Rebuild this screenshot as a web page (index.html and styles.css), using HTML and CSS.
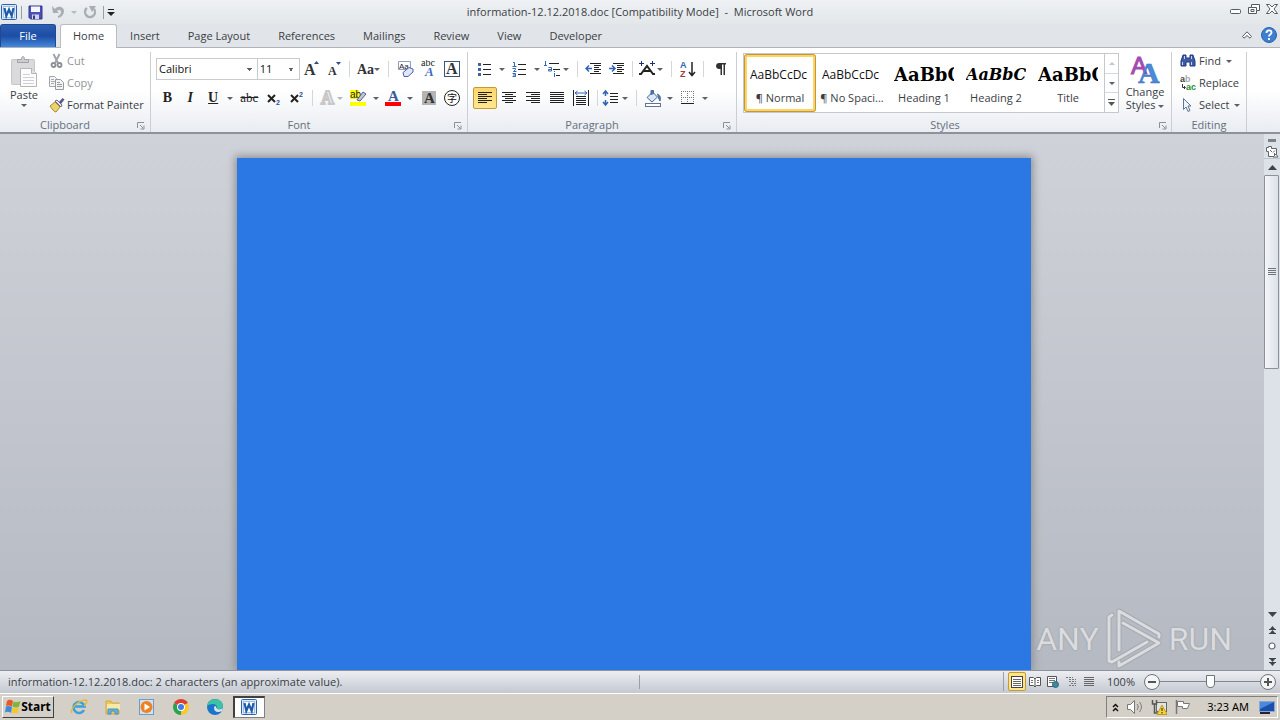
FILE: index.html
```html
<!DOCTYPE html>
<html lang="en">
<head>
    <meta charset="UTF-8">
    <meta name="viewport" content="width=device-width, initial-scale=1.0">
    <title>information-12.12.2018.doc [Compatibility Mode] - Microsoft Word</title>
    <link rel="stylesheet" href="styles.css">
</head>

<body>
    <!-- title bar -->
    <header class="titlebar">
        <div class="quick">
            <svg width="17" height="17" viewBox="0 0 17 17"><rect x=".5" y=".5" width="15" height="15" rx="1" fill="#dceafa" stroke="#2a62ad"/><rect x="2.500" y="2.500" width="11" height="11" fill="#fff" stroke="#9fc0e6"/><path d="M3.500 4l1.800 8L8 5.500l2.700 6.500 1.800-8" fill="none" stroke="#1c5cab" stroke-width="2.200"/></svg>
            <span class="bar"></span>
            <button type="button" class="qbtn" aria-label="Save"><svg width="15" height="15" viewBox="0 0 15 15"><path d="M1 1h13v13H2.500L1 12.500z" fill="#4c4fb5" stroke="#34378d"/><path d="M3 1.500h9V7H3z" fill="#f4f6fc"/><path d="M4 9.500h7V14H4z" fill="#cfd3ea"/><path d="M5 10.500h2V14H5z" fill="#34378d"/></svg></button>
            <button type="button" class="qbtn" aria-label="Undo"><svg width="14" height="14" viewBox="0 0 14 14"><path d="M1 1l1 7h6L6 6c2-2 4-1 4 1 0 1.500-1 3-3 4v2c4-1 6-4 6-7 0-4-6-6-9-2z" fill="#aaadb2"/></svg></button>
            <i class="arrow grey"></i>
            <button type="button" class="qbtn" aria-label="Repeat"><svg width="14" height="14" viewBox="0 0 14 14"><path d="M4 3a5 5 0 1 0 7 1" fill="none" stroke="#aaadb2" stroke-width="2.400"/><path d="M6 1h7L9 7z" fill="#aaadb2"/></svg></button>
            <span class="bar"></span>
            <button type="button" class="qbtn small" aria-label="Customize"><svg width="8" height="8" viewBox="0 0 8 8"><path d="M1 1h6v1H1zM0 4h8L4 8z" fill="#222"/></svg></button>
        </div>
        <h1 class="title">information-12.12.2018.doc [Compatibility Mode] &nbsp;-&nbsp; Microsoft Word</h1>
        <div class="window">
            <button type="button" aria-label="Minimize"><svg width="12" height="12" viewBox="0 0 12 12"><rect x=".5" y="6.500" width="10" height="4" rx="1" fill="#fff" stroke="#555b62"/></svg></button>
            <button type="button" aria-label="Restore"><svg width="12" height="12" viewBox="0 0 12 12"><path d="M3.500 1.500h8v6h-3v3h-8v-6h3z" fill="#fff" stroke="#555b62"/><path d="M3.500 4.500h5v3M3 6.500h3v2H3z" fill="none" stroke="#555b62"/></svg></button>
            <button type="button" aria-label="Close"><svg width="12" height="12" viewBox="0 0 12 12"><path d="M.5 1.500h3L6 4l2.500-2.500h3L8 6l3.500 4.500h-3L6 8l-2.500 2.500h-3L4 6z" fill="#fff" stroke="#555b62"/></svg></button>
        </div>
    </header>

    <!-- ribbon tabs -->
    <nav class="tabs">
        <button type="button" class="file">File</button>
        <button type="button" class="tab active">Home</button>
        <button type="button" class="tab">Insert</button>
        <button type="button" class="tab">Page Layout</button>
        <button type="button" class="tab">References</button>
        <button type="button" class="tab">Mailings</button>
        <button type="button" class="tab">Review</button>
        <button type="button" class="tab">View</button>
        <button type="button" class="tab">Developer</button>
        <div class="help">
            <button type="button" aria-label="Minimize the Ribbon"><svg width="10" height="8" viewBox="0 0 10 8"><path d="M.5 5.500L5 .8l4.500 4.700L8 7.200 5 4.500 2 7.200z" fill="#fff" stroke="#555b62"/></svg></button>
            <button type="button" aria-label="Help"><svg width="16" height="16" viewBox="0 0 16 16"><circle cx="8" cy="8" r="7.500" fill="#3f7fcf" stroke="#2d61a8"/><path d="M5.500 6c0-3.500 5-3.500 5-.5 0 2-2.500 2-2.500 4M8 11v2" fill="none" stroke="#fff" stroke-width="1.800"/></svg></button>
        </div>
    </nav>

    <!-- ribbon -->
    <section class="ribbon">
        <div class="group clipboard">
            <div class="content">
                <button type="button" class="big">
                    <svg width="28" height="32" viewBox="0 0 28 32"><rect x="1.500" y="3.500" width="23" height="25" rx="1" fill="#dadadd" stroke="#c6c6ca"/><path d="M7.500 6.500V3.500h4c0-4 3-4 3 0h4v3z" fill="#cdcdd1" stroke="#a2a2a7"/><path d="M10.500 12.500h11l5 5v13h-16z" fill="#fcfcfc" stroke="#b4b4b9"/><path d="M21.500 12.500v5h5" fill="#e4e4e6" stroke="#b4b4b9"/><path d="M13 18.500h7M13 21.500h11M13 24.500h11M13 27.500h11" stroke="#d0d0d4"/></svg>
                    <span>Paste</span>
                    <i class="arrow"></i>
                </button>
                <div class="stack">
                    <button type="button" class="line" disabled><svg width="16" height="16" viewBox="0 0 16 16"><path d="M4.500 1l4.500 9M10.500 1L6 10" stroke="#a2a5aa" stroke-width="2"/><circle cx="4.500" cy="12" r="2" fill="none" stroke="#8b8e93" stroke-width="1.800"/><circle cx="10.500" cy="12" r="2" fill="none" stroke="#8b8e93" stroke-width="1.800"/></svg>Cut</button>
                    <button type="button" class="line" disabled><svg width="16" height="16" viewBox="0 0 16 16"><path d="M.5 1.500h5l2 2v8h-7z" fill="#f4f4f4" stroke="#a2a5a9"/><path d="M2 4.500h3M2 6.500h4M2 8.500h3" stroke="#aaa"/><path d="M6.500 4.500h5l3 3v7h-8z" fill="#f4f4f4" stroke="#96999d"/><path d="M8 7.500h3M8 9.500h5M8 11.500h5" stroke="#999"/></svg>Copy</button>
                    <button type="button" class="line"><svg width="16" height="16" viewBox="0 0 16 16"><path d="M1 9l5-4 5 5-4 5c-2 0-4-3-6-6z" fill="#ecd36c" stroke="#a88b35"/><path d="M6 4l2-1 5 5-1 2z" fill="#e6e7ef" stroke="#6d6d80"/><path d="M10 5l3.500-4 2 1.500L12 7z" fill="#5b5591"/></svg>Format Painter</button>
                </div>
            </div>
            <div class="caption">Clipboard<button type="button" class="launch" aria-label="Clipboard options"><svg width="8" height="8" viewBox="0 0 8 8"><path d="M.5 6V.5H7M3 3l3.500 3.500M7 3.500V7H3.500" fill="none" stroke="#8c9198"/></svg></button></div>
        </div>

        <div class="group font">
            <div class="rows">
                <div class="row">
                    <select class="combo face" aria-label="Font"><option>Calibri</option></select>
                    <select class="combo size" aria-label="Font Size"><option>11</option></select>
                    <button type="button" class="tool" aria-label="Grow Font"><svg width="18" height="18" viewBox="0 0 18 18"><text x="2" y="15" class="serif" font-size="16">A</text><path d="M12 4l2.500-3L17 4z" fill="#2f4a86"/></svg></button>
                    <button type="button" class="tool" aria-label="Shrink Font"><svg width="18" height="18" viewBox="0 0 18 18"><text x="3" y="15" class="serif" font-size="12">A</text><path d="M11 2h5l-2.500 3z" fill="#2f4a86"/></svg></button>
                    <span class="sep"></span>
                    <button type="button" class="tool drop" aria-label="Change Case"><svg width="20" height="18" viewBox="0 0 20 18"><text x="3" y="14" class="serif" font-size="14">Aa</text></svg><i class="arrow"></i></button>
                    <span class="sep"></span>
                    <button type="button" class="tool" aria-label="Clear Formatting"><svg width="18" height="18" viewBox="0 0 18 18"><path d="M2.500 1.500h12v8h-12z" fill="#fff" stroke="#8a9fc4"/><text x="3" y="9" font-family="Liberation Sans" font-size="8" fill="#223">Aa</text><path d="M7 12.500l6-5 4 1.500v3l-5 4.500H8z" fill="#dfe6f7" stroke="#4b65a8"/></svg></button>
                    <button type="button" class="tool" aria-label="Phonetic Guide"><svg width="18" height="18" viewBox="0 0 18 18"><text x="2" y="6" font-family="Liberation Serif" font-size="10" fill="#222">abc</text><text x="6" y="16" font-family="Liberation Serif" font-style="italic" font-weight="bold" font-size="13" fill="#3b6cc0">A</text></svg></button>
                    <button type="button" class="tool" aria-label="Character Border"><svg width="18" height="18" viewBox="0 0 18 18"><rect x="2.500" y="1.500" width="15" height="15" fill="#fff" stroke="#3a5680"/><text x="4" y="14" class="serif" font-size="16">A</text></svg></button>
                </div>
                <div class="row">
                    <button type="button" class="tool letter"><b>B</b></button>
                    <button type="button" class="tool letter"><em>I</em></button>
                    <button type="button" class="tool letter"><u>U</u></button>
                    <button type="button" class="more" aria-label="Underline style"><i class="arrow"></i></button>
                    <button type="button" class="tool letter wide"><s>abc</s></button>
                    <button type="button" class="tool" aria-label="Subscript"><svg width="18" height="18" viewBox="0 0 18 18"><path d="M3 6l7 7M10 6l-7 7" stroke="#222" stroke-width="2"/><text x="11" y="16" class="sans" font-size="7" fill="#1f4fa5">2</text></svg></button>
                    <button type="button" class="tool" aria-label="Superscript"><svg width="18" height="18" viewBox="0 0 18 18"><path d="M3 6l7 7M10 6l-7 7" stroke="#222" stroke-width="2"/><text x="11" y="8" class="sans" font-size="7" fill="#1f4fa5">2</text></svg></button>
                    <span class="sep"></span>
                    <button type="button" class="tool drop" aria-label="Text Effects" disabled><svg width="20" height="18" viewBox="0 0 20 18"><text x="4" y="15" font-family="Liberation Serif" font-weight="bold" font-size="18" fill="#fff" stroke="#c8c8ca" stroke-width="2">A</text></svg><i class="arrow grey"></i></button>
                    <button type="button" class="tool" aria-label="Highlight"><svg width="18" height="18" viewBox="0 0 18 18"><path d="M1 1h9v9H1z" fill="#ff0"/><text x="1" y="9" font-family="Liberation Sans" font-size="10" fill="#222">ab</text><path d="M8 11l6-8 3 2-6 7z" fill="#bcc7de" stroke="#56617a"/><path d="M1 13h16v4H1z" fill="#ff0"/></svg></button>
                    <button type="button" class="more" aria-label="Highlight colour"><i class="arrow"></i></button>
                    <button type="button" class="tool" aria-label="Font Color"><svg width="18" height="18" viewBox="0 0 18 18"><text x="4" y="12" font-family="Liberation Serif" font-weight="bold" font-size="15" fill="#3a5a9a">A</text><path d="M1 13h16v4H1z" fill="#f00"/></svg></button>
                    <button type="button" class="more" aria-label="More colours"><i class="arrow"></i></button>
                    <button type="button" class="tool" aria-label="Character Shading"><svg width="18" height="18" viewBox="0 0 18 18"><path d="M3 2h14v14H3z" fill="#b4b4b4"/><text x="5" y="14" class="serif" font-size="15">A</text></svg></button>
                    <button type="button" class="tool" aria-label="Enclose Characters"><svg width="18" height="18" viewBox="0 0 18 18"><circle cx="10" cy="9" r="7.500" fill="#fff" stroke="#222"/><text x="5" y="13" font-family="Noto Sans CJK JP" font-size="10" fill="#111">字</text></svg></button>
                </div>
            </div>
            <div class="caption">Font<button type="button" class="launch" aria-label="Font options"><svg width="8" height="8" viewBox="0 0 8 8"><path d="M.5 6V.5H7M3 3l3.500 3.500M7 3.500V7H3.500" fill="none" stroke="#8c9198"/></svg></button></div>
        </div>

        <div class="group paragraph">
            <div class="rows">
                <div class="row">
                    <button type="button" class="tool" aria-label="Bullets"><svg width="18" height="18" viewBox="0 0 18 18"><path d="M2 3h3v3H2zM2 8h3v3H2zM2 13h3v3H2z" fill="#44619c"/><path d="M7 4.500h8M7 9.500h8M7 14.500h8" stroke="#222"/></svg></button>
                    <button type="button" class="more" aria-label="Bullet library"><i class="arrow"></i></button>
                    <button type="button" class="tool" aria-label="Numbering"><svg width="18" height="18" viewBox="0 0 18 18"><path d="M2 2.500h1.500V6M1.500 6.500h4M1.500 8.500h3v1l-2 2h3M1.500 13.500h3v3h-3M2 15h2" stroke="#3565b5" fill="none"/><path d="M7 4.500h8M7 9.500h8M7 14.500h8" stroke="#222"/></svg></button>
                    <button type="button" class="more" aria-label="Number library"><i class="arrow"></i></button>
                    <button type="button" class="tool drop" aria-label="Multilevel List"><svg width="20" height="18" viewBox="0 0 20 18"><path d="M2.500 1v4M1 5.500h3M5.500 7.500h3v3.500h-3V9.500h3M11.500 11v1M11.500 13v4" stroke="#3565b5" fill="none"/><path d="M6 3.500h10M10 9.500h7M13 15.500h4" stroke="#222"/></svg><i class="arrow"></i></button>
                    <span class="sep"></span>
                    <button type="button" class="tool" aria-label="Decrease Indent"><svg width="18" height="18" viewBox="0 0 18 18"><path d="M5 3.500h11M9 5.500h7M9 7.500h5M9 9.500h7M9 11.500h5M5 13.500h11" stroke="#222"/><path d="M1 8.500h6M4 5.500l-3 3 3 3" stroke="#2f63b5" stroke-width="1.500" fill="none"/></svg></button>
                    <button type="button" class="tool" aria-label="Increase Indent"><svg width="18" height="18" viewBox="0 0 18 18"><path d="M5 3.500h11M9 5.500h7M9 7.500h5M9 9.500h7M9 11.500h5M5 13.500h11" stroke="#222"/><path d="M1 8.500h6M4 5.500l3 3-3 3" stroke="#2f63b5" stroke-width="1.500" fill="none"/></svg></button>
                    <span class="sep"></span>
                    <button type="button" class="tool drop" aria-label="Asian Layout"><svg width="20" height="18" viewBox="0 0 20 18"><path d="M2 14h2l6-8 6 8h2M6 11h8" stroke="#222" stroke-width="2" fill="none"/><path d="M2 3.500h5M4.500 1v5M13 3.500h5M15.500 1v5" stroke="#1c2f7c" fill="none"/></svg><i class="arrow"></i></button>
                    <span class="sep"></span>
                    <button type="button" class="tool" aria-label="Sort"><svg width="18" height="18" viewBox="0 0 18 18"><text x="1" y="8" class="sans" font-size="9" fill="#2f63b5">A</text><text x="1" y="17" class="sans" font-size="9" fill="#a33a3a">Z</text><path d="M13 2v13M10 12l3 3.500 3-3.500" stroke="#222" stroke-width="1.500" fill="none"/></svg></button>
                    <span class="sep"></span>
                    <button type="button" class="tool" aria-label="Show Marks"><svg width="18" height="18" viewBox="0 0 18 18"><path d="M8 3h7v1.500h-1V15h-1.500V4.500H11V15H9.500V9H8C4 9 4 3 8 3z" fill="#333"/></svg></button>
                </div>
                <div class="row">
                    <button type="button" class="tool align on" aria-label="Align Left"><svg width="16" height="14" viewBox="0 0 16 14"><path d="M1 1.500h14M1 3.500h9M1 5.500h14M1 7.500h9M1 9.500h14M1 11.500h9" stroke="#222"/></svg></button>
                    <button type="button" class="tool align" aria-label="Center"><svg width="16" height="14" viewBox="0 0 16 14"><path d="M1 1.500h14M4 3.500h8M1 5.500h14M4 7.500h8M1 9.500h14M4 11.500h8" stroke="#222"/></svg></button>
                    <button type="button" class="tool align" aria-label="Align Right"><svg width="16" height="14" viewBox="0 0 16 14"><path d="M1 1.500h14M6 3.500h9M1 5.500h14M6 7.500h9M1 9.500h14M6 11.500h9" stroke="#222"/></svg></button>
                    <button type="button" class="tool align" aria-label="Justify"><svg width="16" height="14" viewBox="0 0 16 14"><path d="M1 1.500h14M1 3.500h14M1 5.500h14M1 7.500h14M1 9.500h14M1 11.500h14" stroke="#222"/></svg></button>
                    <button type="button" class="tool align" aria-label="Distributed"><svg width="16" height="16" viewBox="0 0 16 16"><path d="M.5 0v16M15.500 0v16M3 6.500h10M3 8.500h10M3 10.500h10M3 12.500h10M3 14.500h10" stroke="#222"/><path d="M2 3h12M4.500 1L2 3l2.500 2M11.500 1L14 3l-2.500 2" stroke="#2f63b5" fill="none"/></svg></button>
                    <span class="sep"></span>
                    <button type="button" class="tool drop" aria-label="Line Spacing"><svg width="20" height="18" viewBox="0 0 20 18"><path d="M3.500 2v5M3.500 11v5M1 5l2.500-3L6 5M1 13l2.500 3L6 13" stroke="#2f63b5" stroke-width="1.500" fill="none"/><path d="M8 4.500h8M8 7.500h8M8 10.500h8M8 13.500h8" stroke="#222"/></svg><i class="arrow"></i></button>
                    <span class="sep"></span>
                    <button type="button" class="tool" aria-label="Shading"><svg width="18" height="18" viewBox="0 0 18 18"><path d="M3 8.500L8.500 3l5 5-5.500 5z" fill="#dbe6f7" stroke="#4c6795"/><path d="M7 6V1.500h2.500V5M13 5c3 1 4 3 3 7l-2-4" fill="#3d77c5" stroke="#4c6795"/><rect x="1.500" y="14.500" width="15" height="3" fill="#fff" stroke="#60758f"/></svg></button>
                    <button type="button" class="more" aria-label="Shading colours"><i class="arrow"></i></button>
                    <button type="button" class="tool" aria-label="Borders"><svg width="14" height="14" viewBox="0 0 14 14"><path d="M.5 0v13M6.500 0v13M12.500 0v13M0 .5h13M0 6.500h13" stroke="#777" stroke-dasharray="1 1"/><path d="M0 12.500h13" stroke="#222"/></svg></button>
                    <button type="button" class="more" aria-label="Border types"><i class="arrow"></i></button>
                </div>
            </div>
            <div class="caption">Paragraph<button type="button" class="launch" aria-label="Paragraph options"><svg width="8" height="8" viewBox="0 0 8 8"><path d="M.5 6V.5H7M3 3l3.500 3.500M7 3.500V7H3.500" fill="none" stroke="#8c9198"/></svg></button></div>
        </div>

        <div class="group styles">
            <div class="content">
                <div class="gallery">
                    <button type="button" class="style on"><span class="sample">AaBbCcDc</span><span>¶ Normal</span></button>
                    <button type="button" class="style"><span class="sample">AaBbCcDc</span><span>¶ No Spaci...</span></button>
                    <button type="button" class="style"><span class="sample heading">AaBbC</span><span>Heading 1</span></button>
                    <button type="button" class="style"><span class="sample heading slant">AaBbCc</span><span>Heading 2</span></button>
                    <button type="button" class="style"><span class="sample heading">AaBbC</span><span>Title</span></button>
                    <div class="scroll">
                        <button type="button" aria-label="Row up"><i class="arrow up"></i></button>
                        <button type="button" aria-label="Row down"><i class="arrow"></i></button>
                        <button type="button" aria-label="More styles"><svg width="7" height="7" viewBox="0 0 7 7"><path d="M0 0h7v1H0zM0 3h7L3.500 7z" fill="#555"/></svg></button>
                    </div>
                </div>
                <button type="button" class="big change">
                    <svg width="30" height="30" viewBox="0 0 30 30"><text x="1" y="19" font-family="Liberation Sans" font-size="24" fill="#a34bb0" stroke="#a34bb0">A</text><text x="8" y="28" font-family="Liberation Serif" font-weight="bold" font-size="30" fill="#4a8ad8" stroke="#3a6fc0" stroke-width=".5">A</text></svg>
                    <span>Change<br>Styles <i class="arrow"></i></span>
                </button>
            </div>
            <div class="caption">Styles<button type="button" class="launch" aria-label="Styles options"><svg width="8" height="8" viewBox="0 0 8 8"><path d="M.5 6V.5H7M3 3l3.500 3.500M7 3.500V7H3.500" fill="none" stroke="#8c9198"/></svg></button></div>
        </div>

        <div class="group editing">
            <div class="stack">
                <button type="button" class="line"><svg width="16" height="16" viewBox="0 0 16 16"><path d="M3 2h3v3h4V2h3l2 6v5h-5V9H6v4H1V8z" fill="#3c5ca8" stroke="#223a78"/><path d="M2.500 9v3M11.500 9v3M4.500 3v3M11.500 3v3" stroke="#c8d6f4"/></svg>Find <i class="arrow"></i></button>
                <button type="button" class="line"><svg width="16" height="16" viewBox="0 0 16 16"><text x="0" y="7" class="sans" font-size="9" fill="#444">a</text><text x="5" y="7" class="sans" font-size="9" fill="#aaa">b</text><path d="M2.500 9v3.500H5M4 11l1.500 1.500L4 14" fill="none" stroke="#335"/><text x="6" y="15" class="sans" font-size="9" fill="#2b8a35">ac</text></svg>Replace</button>
                <button type="button" class="line"><svg width="16" height="16" viewBox="0 0 16 16"><path d="M3.500 1.500v11l2.500-2.500 2 4.500 2-1-2-4.500h3z" fill="#eef3fb" stroke="#5e7596"/></svg>Select <i class="arrow"></i></button>
            </div>
            <div class="caption">Editing</div>
        </div>
    </section>

    <!-- document -->
    <main class="workspace">
        <div class="canvas">
            <div class="page"></div>
            <div class="watermark">
                <span>ANY</span>
                <svg width="58" height="62" viewBox="0 0 58 62"><g fill="none" stroke-linejoin="round" stroke-linecap="round"><path d="M7 7L4 9v44l3 1 35-20M14 42V3l40 23v3M18 15l36 20-40 23v-4" stroke="#a6aab0" stroke-width="5"/><path d="M7 7L4 9v44l3 1 35-20M14 42V3l40 23v3M18 15l36 20-40 23v-4" stroke="#dadcdf" stroke-width="3"/></g></svg>
                <span>RUN</span>
            </div>
        </div>
        <aside class="scrollbar">
            <button type="button" class="split" aria-label="Split"></button>
            <button type="button" class="ruler" aria-label="View Ruler"><svg width="13" height="13" viewBox="0 0 13 13"><path d="M.5 2.500h2v-1h3v2h5v8h-8v-5h-2z" fill="#fff" stroke="#62666f"/><path d="M4 5l2 2M7 7.500l2-2M8.500 8v3M10 9l2 3H7z" fill="#fff" stroke="#62666f"/></svg></button>
            <button type="button" class="step" aria-label="Scroll up"><svg width="9" height="5" viewBox="0 0 9 5"><path d="M0 5h9L4.500 0z" fill="#3f434b"/></svg></button>
            <div class="track"><div class="thumb"><i></i></div></div>
            <button type="button" class="step" aria-label="Scroll down"><svg width="9" height="5" viewBox="0 0 9 5"><path d="M0 0h9L4.500 5z" fill="#3f434b"/></svg></button>
            <button type="button" class="step" aria-label="Previous page"><svg width="7" height="8" viewBox="0 0 7 8"><path d="M1 3h5L3.500 0zM1 7h5L3.500 4zM0 3h7v1H0zM0 7h7v1H0z" fill="#3f434b"/></svg></button>
            <button type="button" class="step" aria-label="Browse object"><svg width="8" height="8" viewBox="0 0 8 8"><circle cx="4" cy="4" r="3" fill="#fff" stroke="#62666f" stroke-width="1.200"/></svg></button>
            <button type="button" class="step" aria-label="Next page"><svg width="7" height="8" viewBox="0 0 7 8"><path d="M1 1h5L3.500 4zM1 5h5L3.500 8zM0 0h7v1H0zM0 4h7v1H0z" fill="#3f434b"/></svg></button>
        </aside>
    </main>

    <!-- status bar -->
    <footer class="status">
        <span class="info">information-12.12.2018.doc: 2 characters (an approximate value).</span>
        <div class="views">
            <button type="button" class="view on" aria-label="Print Layout"><svg width="12" height="12" viewBox="0 0 12 12"><rect x=".5" y=".5" width="11" height="11" fill="#fff" stroke="#444"/><path d="M2 3.500h8M2 5.500h8M2 7.500h8M2 9.500h8" stroke="#666"/></svg></button>
            <button type="button" class="view" aria-label="Full Screen Reading"><svg width="12" height="12" viewBox="0 0 12 12"><path d="M.5 1.500h4L6 3l1.500-1.500h4v8h-4L6 11 4.500 9.500h-4zM6 3v8" fill="#fff" stroke="#555"/><path d="M2 4.500h2M2 6.500h2M8 4.500h2M8 6.500h2" stroke="#777"/></svg></button>
            <button type="button" class="view" aria-label="Web Layout"><svg width="12" height="12" viewBox="0 0 12 12"><path d="M.5 .5h9v10h-9z" fill="#fff" stroke="#555"/><path d="M2 2.500h6M2 4.500h6M2 6.500h4" stroke="#777"/><circle cx="8.500" cy="8.500" r="3" fill="#3c8d8d" stroke="#2e5f9a"/></svg></button>
            <button type="button" class="view" aria-label="Outline"><svg width="12" height="12" viewBox="0 0 12 12"><path d="M1 1.500h7M4 3.500h7M4 5.500h7M6 7.500h5M4 9.500h7" stroke="#777" stroke-dasharray="2 1"/></svg></button>
            <button type="button" class="view" aria-label="Draft"><svg width="12" height="12" viewBox="0 0 12 12"><path d="M1 1.500h10M1 3.500h10M1 5.500h10M1 7.500h10M1 9.500h10" stroke="#666"/></svg></button>
            <button type="button" class="percent">100%</button>
            <button type="button" class="round" aria-label="Zoom out"><svg width="8" height="8" viewBox="0 0 8 8"><path d="M0 3h8v2H0z" fill="#555"/></svg></button>
            <input type="range" class="zoom" min="0" max="100" value="50" aria-label="Zoom">
            <button type="button" class="round" aria-label="Zoom in"><svg width="8" height="8" viewBox="0 0 8 8"><path d="M0 3h8v2H0zM3 0h2v8H3z" fill="#555"/></svg></button>
        </div>
    </footer>

    <!-- taskbar -->
    <footer class="taskbar">
        <button type="button" class="start"><svg width="16" height="16" viewBox="0 0 16 16"><path d="M2 2c2-2 4-1 6 0L7 7.500C5 6.500 3 6 1 7z" fill="#e8582a"/><path d="M8.500 2.500c2 1 4 1 7-.5L14 7.500c-2 1.500-4 1-6.500 .3z" fill="#7db63b"/><path d="M1 7.500c2-1 4-.5 6 .5l-1 6c-2-1.500-4-1.500-6-.5z" fill="#3d8bd8"/><path d="M7.500 8.500c2 1 4 1 6.500-.5l-1 5.500c-2 1-4 1-6.500 .5z" fill="#f7c52e"/></svg>Start</button>
        <div class="apps">
            <button type="button" aria-label="Internet Explorer"><svg width="18" height="18" viewBox="0 0 18 18"><path d="M14 12a5.500 5.500 0 1 1 .5-3.500H5" fill="none" stroke="#3ba0dc" stroke-width="2.600"/><path d="M2 15C-1 12 8 2 16 2c2 1 0 4-2 6" fill="none" stroke="#e5b93a" stroke-width="1.400"/></svg></button>
            <button type="button" aria-label="Explorer"><svg width="18" height="18" viewBox="0 0 18 18"><path d="M2 3h5l1 2h7v11H2z" fill="#ecc95b" stroke="#d2aa43"/><path d="M3 6h13v6H3z" fill="#f9e9a6"/><path d="M4 16v-5h10v5h-3v-3H7v3z" fill="#67b4dd" stroke="#4692be"/></svg></button>
            <button type="button" aria-label="Media Player"><svg width="18" height="18" viewBox="0 0 18 18"><rect x="1.500" y="1.500" width="14" height="15" fill="#cfe1f2" stroke="#6c9cc9"/><circle cx="8.500" cy="9" r="6" fill="#ef8120"/><path d="M6.500 5.500v7l5.500-3.500z" fill="#fff"/></svg></button>
            <button type="button" aria-label="Chrome"><svg width="18" height="18" viewBox="0 0 18 18"><path d="M9 9L2.100 5a8 8 0 0 1 13.800 0z" fill="#df3d31"/><path d="M9 9l6.900-4A8 8 0 0 1 9 17z" fill="#fcc829"/><path d="M9 9v8A8 8 0 0 1 2.100 5z" fill="#2ba24c"/><circle cx="9" cy="9" r="4" fill="#fff"/><circle cx="9" cy="9" r="3" fill="#3f7de8"/></svg></button>
            <button type="button" aria-label="Edge"><svg width="18" height="18" viewBox="0 0 18 18"><circle cx="9" cy="9" r="8" fill="#1b74c9"/><path d="M1 8C2-1 17-1 17 8c0 3-4 4-7 3 2-3 0-5-3-5-3 0-5 1-6 2z" fill="#3cc2a5"/><path d="M8 10c0 4 4 5 8 3l1-3c-2 2-7 2-7-1 0-2-2-1-2 1z" fill="#d4e5ee"/></svg></button>
            <button type="button" class="current" aria-label="Word"><svg width="17" height="17" viewBox="0 0 17 17"><rect x=".5" y=".5" width="15" height="15" rx="1" fill="#dceafa" stroke="#2a62ad"/><rect x="2.500" y="2.500" width="11" height="11" fill="#fff" stroke="#9fc0e6"/><path d="M3.500 4l1.800 8L8 5.500l2.700 6.500 1.800-8" fill="none" stroke="#1c5cab" stroke-width="2.200"/></svg></button>
        </div>
        <div class="tray">
            <button type="button" aria-label="Show hidden icons"><svg width="7" height="9" viewBox="0 0 7 9"><path d="M1 4l2.500-2.500L6 4M1 8l2.500-2.500L6 8" fill="none" stroke="#111" stroke-width="1.500"/></svg></button>
            <svg width="16" height="16" viewBox="0 0 16 16"><path d="M.5 5.500h3l4-4v13l-4-4h-3z" fill="#fff" stroke="#777"/><path d="M10 5c1.500 2 1.500 4 0 6M12.500 3c2.500 3 2.500 7 0 10" fill="none" stroke="#777"/></svg>
            <svg width="16" height="16" viewBox="0 0 16 16"><rect x="5.500" y="3.500" width="10" height="9" fill="#dfe4e8" stroke="#666"/><path d="M1.500 1v4h4V1M3.500 5v9h4" fill="none" stroke="#555" stroke-width="1.500"/><path d="M11 6l5 9.500H6z" fill="#f8d437" stroke="#c49b1b"/><path d="M11 9v3M11 13v1.500" stroke="#222"/></svg>
            <svg width="16" height="16" viewBox="0 0 16 16"><path d="M1.500 1v14" stroke="#777" stroke-width="1.500"/><path d="M2.500 2.500h6v2h6l-2 5h-5v-2h-5z" fill="#fff" stroke="#777"/></svg>
            <time>3:23 AM</time>
            <svg width="16" height="14" viewBox="0 0 16 14"><path d="M.5 1.500h15v10H.5z" fill="#1b4fae" stroke="#89a7cf"/><path d="M1 2h14L1 9z" fill="#4a88dc"/><path d="M1 12h10v2H1z" fill="#223"/></svg>
        </div>
    </footer>
</body>
</html>
```

FILE: styles.css
```css
*
{
    margin:0;
    padding:0;
    box-sizing:border-box;
}
body
{
    height:100vh;
    display:flex;
    flex-direction:column;
    overflow:hidden;
    background:#e1e5e9;
    color:#3a3e44;
    font-family:"Open Sans", "Noto Sans", sans-serif;
    font-size:11px;
    line-height:14px;
}
button
{
    display:flex;
    align-items:center;
    justify-content:center;
    border:0;
    background:none;
    color:inherit;
    font:inherit;
    white-space:nowrap;
}
button:disabled{
    color:#929599;
}
svg{
    display:block;
    flex:none;
}
.serif{
    font-family:"Liberation Serif", serif;
    font-weight:bold;
    fill:#333;
}
.sans{
    font-family:"Liberation Sans", sans-serif;
    font-weight:bold;
}

/* little drop-down triangle */
.arrow{
    display:inline-block;
    flex:none;
    border:3px solid transparent;
    border-top-color:#5d6167;
    border-bottom:0;
    vertical-align:middle;
}
.arrow.up{
    border-top:0;
    border-bottom:3px solid #c3c6ca;
}
.arrow.grey{
    border-top-color:#b5b8bc;
}

/* title bar */
.titlebar{
    display:grid;
    grid-template-columns:1fr auto 1fr;
    align-items:center;
    height:24px;
    background:linear-gradient(#eff1f4,#e3e7ea);
}
.quick{
    display:flex;
    align-items:center;
    gap:3px;
    padding-left:1px;
}
.bar{
    width:1px;
    height:13px;
    background:#9a9ea5;
}
.qbtn{
    width:20px;
    height:20px;
}
.qbtn.small{
    width:8px;
}
.title{
    font-size:11px;
    font-weight:normal;
}
.window{
    display:flex;
    justify-content:flex-end;
    gap:6px;
    padding:0 2px 6px 0;
}

/* tabs */
.tabs{
    display:flex;
    align-items:flex-end;
    gap:2px;
    height:24px;
    background:#e1e5e9;
    border-bottom:1px solid #b0b4ba;
}
.tab{
    height:23px;
    padding:0 13px;
}
.tab.active{
    height:24px;
    margin:0 -2px -1px 0;
    background:#fff;
    border:1px solid #b9bdc3;
    border-bottom:0;
    border-radius:3px 3px 0 0;
    padding:0 12px 2px;
}
.file{
    width:56px;
    height:23px;
    margin-right:2px;
    background:linear-gradient(#2c5fb4,#1d4da4 50%,#4389dd);
    border:1px solid #1f4a93;
    border-bottom:0;
    border-radius:3px 3px 0 0;
    color:#fff;
}
.help{
    display:flex;
    gap:9px;
    margin-left:auto;
    padding:0 3px 4px 0;
}

/* ribbon */
.ribbon{
    display:flex;
    height:86px;
    padding-top:4px;
    background:linear-gradient(#fff 50%,#e9ecf1);
    border-bottom:2px solid #8e929a;
}
.group{
    display:flex;
    flex-direction:column;
    justify-content:space-between;
    padding:0 5px;
    border-right:1px solid #cbced4;
}
.clipboard{
    width:151px;
}
.font{
    width:317px;
}
.paragraph{
    width:269px;
}
.styles{
    width:435px;
}
.editing{
    width:75px;
}
.content{
    display:flex;
}
.caption{
    display:flex;
    justify-content:center;
    position:relative;
    height:14px;
    padding-right:20px;
    color:#66707c;
}
.editing .caption{
    padding-right:0;
}
.launch{
    position:absolute;
    right:0;
    top:4px;
}
.big{
    flex-direction:column;
    width:38px;
    height:60px;
}
.clipboard .big{
    height:58px;
}
.big .arrow{
    margin-top:2px;
}
.stack{
    display:flex;
    flex-direction:column;
}
.line{
    justify-content:flex-start;
    gap:2px;
    height:22px;
    margin-top:-2px;
    padding-left:6px;
}
.line + .line{
    margin-top:0;
}
.line .arrow{
    margin-left:2px;
}
.editing .line{
    gap:3px;
    padding-left:3px;
}
.rows{
    display:flex;
    flex-direction:column;
    gap:7px;
    padding-top:6px;
}
.row{
    display:flex;
    align-items:center;
    height:22px;
}
.sep{
    width:1px;
    height:16px;
    margin:0 4px;
    background:#d3d6db;
}
.combo{
    height:22px;
    padding-left:2px;
    border:1px solid #c8ccd2;
    border-radius:0;
    appearance:none;
    background:#fff conic-gradient(from -45deg at 50% 100%,#5d6167 90deg,transparent 0) no-repeat right 5px center / 6px 3px;
    color:#111;
    font:inherit;
}
.face{
    width:102px;
}
.size{
    width:43px;
    margin-left:-1px;
}
.tool{
    width:23px;
    height:22px;
}
.tool.wide{
    width:26px;
}
.tool.drop{
    width:30px;
    justify-content:flex-start;
}
.tool.align{
    width:24px;
}
.tool.on{
    background:linear-gradient(#fbd66d,#ffe78e);
    border:1px solid #c29a3a;
    border-radius:2px;
}
.more{
    width:12px;
    height:22px;
}
.letter{
    color:#222;
    font-family:"Liberation Serif", serif;
    font-size:14px;
    font-weight:bold;
}
.letter s{
    font-size:13px;
    font-weight:normal;
}

/* style gallery */
.styles{
    padding:0 4px 0 6px;
}
.styles .content{
    gap:6px;
    padding-top:1px;
}
.gallery{
    display:flex;
    height:60px;
    border:1px solid #c5c9cf;
    background:#fff;
}
.style{
    flex-direction:column;
    justify-content:space-between;
    width:72px;
    padding:11px 6px 7px;
}
.style.on{
    border:3px solid #f7d56a;
    outline:1px solid #c9962f;
    outline-offset:-1px;
    border-radius:3px;
    padding:8px 3px 4px;
}
.sample{
    width:60px;
    height:20px;
    overflow:hidden;
    color:#111;
    font-family:"Open Sans", sans-serif;
    font-size:12px;
    line-height:20px;
    text-align:left;
}
.sample.heading{
    font-family:"DejaVu Serif", serif;
    font-size:18px;
    font-weight:bold;
    color:#000;
}
.sample.slant{
    font-style:italic;
    font-size:16px;
}
.scroll{
    display:flex;
    flex-direction:column;
    width:14px;
    border-left:1px solid #c5c9cf;
}
.scroll button{
    flex:1;
}
.scroll button + button{
    border-top:1px solid #d5d8dc;
}
.change{
    width:40px;
    line-height:13px;
}
.big.change .arrow{
    margin-top:0;
}

/* document */
.workspace{
    flex:1;
    display:flex;
    min-height:0;
}
.canvas{
    flex:1;
    position:relative;
    display:flex;
    justify-content:center;
    padding:24px 0 0 4px;
    overflow:hidden;
    background:linear-gradient(#cfd2d9,#b5b9c1);
}
.page{
    width:794px;
    background:#2b78e4;
    box-shadow:0 0 8px 2px #8d8f92;
}
.watermark{
    position:absolute;
    right:32px;
    bottom:0;
    display:flex;
    align-items:center;
    gap:6px;
    color:#dadcdf;
    font-family:"Liberation Sans Narrow", "Roboto", sans-serif;
    font-size:32px;
    line-height:60px;
    text-shadow:0 0 2px #8f9399;
}
.scrollbar{
    display:flex;
    flex-direction:column;
    width:16px;
    background:#dde1e8;
}
.split{
    height:3px;
    margin:5px 4px 2px;
    background:#7d818a;
}
.ruler{
    height:15px;
    border-bottom:1px solid #c0c4cb;
}
.step{
    height:16px;
}
.track{
    flex:1;
}
.thumb{
    display:flex;
    align-items:center;
    justify-content:center;
    height:45%;
    width:15px;
    border:1px solid #8d919b;
    border-radius:1px;
    background:linear-gradient(to right,#f4f6fa,#dce0e8);
}
.thumb i{
    width:8px;
    height:7px;
    background:repeating-linear-gradient(#70747c 0 1px,transparent 1px 2px);
}

/* status bar */
.status{
    display:flex;
    align-items:center;
    height:23px;
    padding-bottom:1px;
    border-top:1px solid #8e929a;
    background:linear-gradient(#eceef2,#c4c8d0);
}
.info{
    width:50%;
    padding-left:8px;
    border-right:1px solid #9ba0a8;
}
.views{
    display:flex;
    align-items:center;
    margin-left:auto;
    padding:0 4px;
    border-left:1px solid #9ba0a8;
}
.view{
    width:18px;
    height:19px;
}
.view.on{
    background:#ffe58a;
    border:1px solid #c29a3a;
    border-radius:2px;
}
.percent{
    width:46px;
}
.round{
    width:16px;
    height:16px;
    border:1px solid #6f737a;
    border-radius:50%;
    background:#f4f5f7;
}
.zoom{
    width:100px;
    height:16px;
    appearance:none;
    background:linear-gradient(#83878e,#83878e) no-repeat center / 100% 1px;
}
.zoom::-webkit-slider-thumb{
    appearance:none;
    width:9px;
    height:13px;
    border:1px solid #6f737a;
    border-radius:1px 1px 5px 5px;
    background:#fff;
}

/* taskbar */
.taskbar{
    display:flex;
    align-items:center;
    height:27px;
    padding:2px;
    border-top:1px solid #fff;
    background:#d4d0c8;
    color:#000;
}
.start{
    width:52px;
    height:22px;
    border:1px solid #fff;
    border-right-color:#404040;
    border-bottom-color:#404040;
    font-family:"Noto Sans", sans-serif;
    font-size:12px;
    font-weight:bold;
}
.apps{
    display:flex;
    gap:2px;
    padding-left:9px;
}
.apps button{
    width:32px;
    height:22px;
}
.apps .current{
    background:#fff;
    border:1px solid #808080;
    border-top:2px solid #404040;
    border-left:2px solid #404040;
}
.tray{
    display:flex;
    align-items:center;
    gap:8px;
    height:22px;
    margin-left:auto;
    padding:0 2px 0 5px;
    border:1px solid #808080;
    border-right-color:#fff;
    border-bottom-color:#fff;
}
.tray time{
    padding:0 2px 0 8px;
    font-family:"Noto Sans", sans-serif;
}
```
